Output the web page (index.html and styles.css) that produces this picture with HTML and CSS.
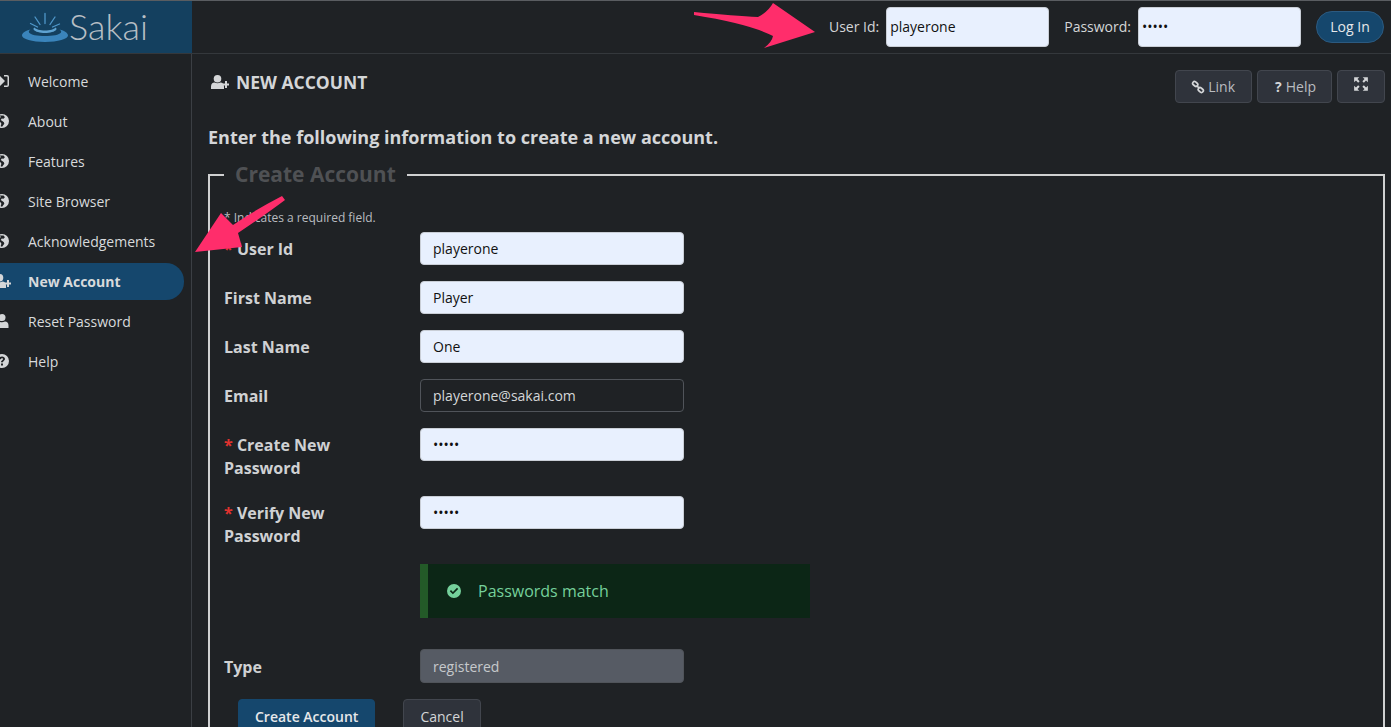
FILE: index.html
```html
<!DOCTYPE html>
<html lang="en">
<head>
    <meta charset="UTF-8">
    <meta name="viewport" content="width=device-width, initial-scale=1.0">
    <title>New Account</title>
    <link rel="stylesheet" href="styles.css">
</head>
<body>

    <svg class="defs" width="0" height="0">
        <symbol id="i-globe" viewBox="0 0 14 14">
            <path fill-rule="evenodd" d="M7 0a7 7 0 1 1 0 14A7 7 0 0 1 7 0zM4.600 1.600 6 3 4.200 4.400 2.600 4.200 1.500 6 3.400 8l2.200.2.8 1.600-.8 2.400 1.500.6 2.200-3-.4-1.600-2-1.400L5.700 6l1-1.600 1.800.4L9.900 3.300 8.600 1.400z"/>
        </symbol>
        <symbol id="i-signin" viewBox="0 0 14 14">
            <path d="M0 5h5V2l5 5-5 5V9H0zM9 1h3a2 2 0 0 1 2 2v8a2 2 0 0 1-2 2H9v-1.500h3a.5.5 0 0 0 .5-.5V3a.5.5 0 0 0-.5-.5H9z"/>
        </symbol>
        <symbol id="i-userplus" viewBox="0 0 18 14">
            <circle cx="6.500" cy="3.800" r="3.800"/>
            <path d="M0 14v-2.500C0 9 1.500 7.500 3.500 7.500c1.800 1 4.200 1 6 0 2 0 3.500 1.500 3.500 4V14z"/>
            <path d="M14 6h2v2.500h2.500v2H16V13h-2v-2.500h-2.500v-2H14z"/>
        </symbol>
        <symbol id="i-user" viewBox="0 0 14 14">
            <circle cx="7" cy="3.600" r="3.500"/>
            <path d="M.5 14v-2.500c0-2.500 1.500-4 3.500-4 1.800 1 4.200 1 6 0 2 0 3.500 1.500 3.500 4V14z"/>
        </symbol>
        <symbol id="i-question" viewBox="0 0 14 14">
            <path fill-rule="evenodd" d="M7 0a7 7 0 1 1 0 14A7 7 0 0 1 7 0zM6 9.500v2h2v-2zM7 2.500C5.300 2.500 4.200 3.400 4 5l1.800.3c.1-.7.500-1.100 1.200-1.100.6 0 1.100.4 1.100.9 0 .5-.3.700-.9 1.100-.8.500-1.200 1-1.200 2.100h2c0-.6.200-.8.800-1.200C8.800 6.500 10 5.900 10 4.900 10 3.400 8.700 2.500 7 2.500z"/>
        </symbol>
        <symbol id="i-link" viewBox="0 0 14 14">
            <g fill="none" stroke="currentColor" stroke-width="1.700">
                <rect x="-2.500" y="-1.800" width="5.600" height="3.600" rx="1.800" transform="translate(4 3.800) rotate(40)"/>
                <rect x="-3.100" y="-1.800" width="5.600" height="3.600" rx="1.800" transform="translate(10 10.200) rotate(40)"/>
                <path d="M5.500 5.500l3 3"/>
            </g>
        </symbol>
        <symbol id="i-expand" viewBox="0 0 14 14">
            <path d="M1 1h4.500L3.900 2.600 5.800 4.500 4.500 5.800 2.600 3.900 1 5.500zM13 1v4.500l-1.600-1.600-1.900 1.900-1.300-1.300 1.900-1.900L8.500 1zM1 13V8.500l1.600 1.600 1.900-1.900 1.300 1.300-1.900 1.900L5.500 13zM13 13H8.500l1.600-1.600-1.900-1.900 1.300-1.300 1.900 1.900L13 8.500z"/>
        </symbol>
        <symbol id="i-check" viewBox="0 0 14 14">
            <path fill-rule="evenodd" d="M7 0a7 7 0 1 1 0 14A7 7 0 0 1 7 0zM10 3.800 5.900 7.900 4 6 2.800 7.200l3.100 3.100 5.300-5.300z"/>
        </symbol>
    </svg>

    <header class="topbar">
        <a class="logo" href="#">
            <svg class="logo-mark" width="48" height="32" viewBox="0 0 48 32">
                <path fill="#3a84bb" d="M1 23.500c0-2.600 3.500-4.800 8.500-6-1.500.9-2 2-1.500 3 1.500 2.500 8.500 3.500 16 3.500s14.500-1 16-3.500c.5-1 0-2.100-1.500-3 5 1.200 8.500 3.400 8.500 6 0 3.500-10 6.500-23 6.500S1 27 1 23.500z"/>
                <path fill="#5fa3d2" d="M13.500 15.500c1.500 2 5.500 3 10.500 3s9-1 10.500-3c1 .7 1.300 1.400.7 2.300-1.300 2-6.200 3.200-11.200 3.200s-9.900-1.200-11.200-3.200c-.6-.9-.3-1.600.7-2.300z"/>
                <path stroke="#4f97ca" stroke-width="1.300" stroke-linecap="round" fill="none" d="M24 1.500v10M14 5l5 7.500M34 5l-5 7.500M9.500 11.500l7 3.500M38.500 12l-7 3"/>
            </svg>
            <span class="logo-text">Sakai</span>
        </a>
        <form class="login">
            <label for="top_user">User Id:</label>
            <input class="login-input" type="text" id="top_user" value="playerone">
            <label class="pass-label" for="top_pass">Password:</label>
            <input class="login-input" type="password" id="top_pass" value="12345">
            <button class="login-btn" type="button">Log In</button>
        </form>
    </header>

    <div class="layout">
        <nav class="sidebar">
            <a class="nav-item" href="#"><svg class="nav-icon"><use href="#i-signin"/></svg>Welcome</a>
            <a class="nav-item" href="#"><svg class="nav-icon"><use href="#i-globe"/></svg>About</a>
            <a class="nav-item" href="#"><svg class="nav-icon"><use href="#i-globe"/></svg>Features</a>
            <a class="nav-item" href="#"><svg class="nav-icon"><use href="#i-globe"/></svg>Site Browser</a>
            <a class="nav-item" href="#"><svg class="nav-icon"><use href="#i-globe"/></svg>Acknowledgements</a>
            <a class="nav-item active" href="#"><svg class="nav-icon"><use href="#i-userplus"/></svg>New Account</a>
            <a class="nav-item" href="#"><svg class="nav-icon"><use href="#i-user"/></svg>Reset Password</a>
            <a class="nav-item" href="#"><svg class="nav-icon"><use href="#i-question"/></svg>Help</a>
        </nav>

        <main class="content">
            <div class="title-row">
                <h1 class="page-title"><svg class="title-icon"><use href="#i-userplus"/></svg>New Account</h1>
                <div class="tools">
                    <a class="tool tool-link" href="#"><svg class="tool-icon"><use href="#i-link"/></svg>Link</a>
                    <a class="tool tool-help" href="#"><b class="tool-q">?</b>Help</a>
                    <a class="tool tool-expand" href="#"><svg class="tool-icon"><use href="#i-expand"/></svg></a>
                </div>
            </div>

            <h2 class="intro">Enter the following information to create a new account.</h2>

            <form>
                <fieldset class="box">
                    <legend>Create Account</legend>
                    <p class="note">* Indicates a required field.</p>

                    <div class="row">
                        <label for="user_id"><span class="req">*</span> User Id</label>
                        <input class="field filled" type="text" id="user_id" value="playerone">
                    </div>
                    <div class="row">
                        <label for="first_name">First Name</label>
                        <input class="field filled" type="text" id="first_name" value="Player">
                    </div>
                    <div class="row">
                        <label for="last_name">Last Name</label>
                        <input class="field filled" type="text" id="last_name" value="One">
                    </div>
                    <div class="row">
                        <label for="email">Email</label>
                        <input class="field" type="text" id="email" value="playerone@sakai.com">
                    </div>
                    <div class="row tall">
                        <label for="pw"><span class="req">*</span> Create New<br>Password</label>
                        <input class="field filled" type="password" id="pw" value="12345">
                    </div>
                    <div class="row tall">
                        <label for="pw2"><span class="req">*</span> Verify New<br>Password</label>
                        <input class="field filled" type="password" id="pw2" value="12345">
                    </div>

                    <div class="match">
                        <svg class="match-icon"><use href="#i-check"/></svg>Passwords match
                    </div>

                    <div class="row">
                        <label class="type-label" for="type">Type</label>
                        <input class="field locked" type="text" id="type" value="registered" readonly>
                    </div>

                    <div class="actions">
                        <button class="btn primary" type="submit">Create Account</button>
                        <button class="btn" type="button">Cancel</button>
                    </div>
                </fieldset>
            </form>
        </main>
    </div>

    <!-- annotation arrows drawn over the screenshot -->
    <svg class="arrows" width="1391" height="727" viewBox="0 0 1391 727">
        <path d="M694 12Q735 16 758 17Q768 12 773 3L815 32L764 48Q772 42 773 36Q750 24 694 15Z"/>
        <path d="M282 196Q255 210 233 225L221 213L195 252L242 247L238 233Q265 215 285 200Z"/>
    </svg>

</body>
</html>
```

FILE: styles.css
```css
* {
    box-sizing: border-box;
}
html, body {
    height: 100%;
}
body {
    margin: 0;
    overflow: hidden;
    font-family: "Open Sans", Arial, sans-serif;
    font-size: 14px;
    color: #d4d6d8;
    background-color: #1f2225;
    border-top: 1px solid #5a5d61;
}
a {
    color: inherit;
    text-decoration: none;
}
.defs {
    position: absolute;
}

/* top bar */
.topbar {
    display: flex;
    justify-content: space-between;
    height: 53px;
    border-bottom: 1px solid #34383c;
}
.logo {
    display: flex;
    align-items: center;
    width: 192px;
    padding-left: 21px;
    background-color: #14405f;
}
.logo-mark {
    flex: none;
    margin-top: 2px;
}
.logo-text {
    font-family: Lato, sans-serif;
    font-weight: 300;
    font-size: 36px;
    line-height: 1;
    color: #b7bec4;
    margin-top: -3px;
}
.login {
    display: flex;
    align-items: center;
    padding-right: 7px;
    padding-bottom: 1px;
    font-size: 14px;
}
.login label {
    margin-right: 7px;
}
.login .pass-label {
    margin-left: 15px;
}
.login-input {
    width: 163px;
    height: 40px;
    padding: 0 3px;
    font-family: inherit;
    font-size: 14px;
    color: #111;
    background-color: #e8f0fe;
    border: 1px solid #c9ced6;
    border-radius: 4px;
}
.login-btn {
    width: 68px;
    height: 32px;
    margin-left: 15px;
    font-family: inherit;
    font-size: 14px;
    color: #e6e8ea;
    background-color: #15476d;
    border: 1px solid #2c5a80;
    border-radius: 16px;
}

/* layout */
.layout {
    display: flex;
    height: 673px;
}
.sidebar {
    flex: none;
    width: 192px;
    padding: 9px 7px 0 0;
    border-right: 1px solid #3b3f44;
    overflow: hidden;
}
.nav-item {
    display: flex;
    align-items: center;
    gap: 19px;
    height: 37px;
    margin-bottom: 3px;
    margin-left: -5px;
    padding-bottom: 1px;
    font-size: 14px;
    color: #d8dadc;
}
.nav-item.active {
    font-weight: 700;
    background-color: #15476d;
    border-radius: 0 18px 18px 0;
}
.nav-icon {
    flex: none;
    width: 14px;
    height: 14px;
    fill: #d4d6d8;
    overflow: visible;
}
.active .nav-icon {
    width: 18px;
    margin: 0 -2px;
}

/* content */
.content {
    flex: 1;
    padding: 16px 6px 0 16px;
    min-width: 0;
}
.title-row {
    display: flex;
    justify-content: space-between;
    height: 33px;
}
.page-title {
    display: flex;
    align-items: center;
    gap: 7px;
    margin: 0 0 0 3px;
    height: 24px;
    font-size: 17.500px;
    font-weight: 700;
    text-transform: uppercase;
    color: #d4d6d8;
}
.title-icon {
    width: 18px;
    height: 14px;
    fill: #d4d6d8;
}
.tools {
    display: flex;
    gap: 5px;
}
.tool {
    display: flex;
    align-items: center;
    justify-content: center;
    gap: 4px;
    height: 33px;
    padding: 0 16px;
    font-size: 14px;
    color: #b9bcc0;
    background-color: #2f333b;
    border: 1px solid #42464e;
    border-radius: 4px;
}
.tool-link {
    gap: 3px;
    padding-left: 15px;
}
.tool-help {
    padding: 0 15px 0 17px;
}
.tool-expand {
    padding: 0 16px 5px;
    width: 48px;
}
.tool-icon {
    flex: none;
    width: 14px;
    height: 14px;
    color: #d4d6d8;
    fill: #d4d6d8;
}
.tool-expand .tool-icon {
    width: 16px;
    height: 16px;
}
.tool-q {
    color: #d4d6d8;
}
.intro {
    margin: 22px 0 0;
    font-size: 18px;
    line-height: 25px;
    font-weight: 700;
    color: #d4d6d8;
}
.box {
    margin: 11px 0 0;
    padding: 22px 14px 0;
    min-width: 0;
    border: 2px solid #cfd0d1;
    border-bottom: 0;
}
.box legend {
    padding: 0 11px;
    font-size: 21px;
    line-height: 27px;
    font-weight: 700;
    color: #4f5154;
}
.note {
    margin: 0 0 6px;
    font-size: 12px;
    line-height: 16px;
    color: #b9bcc0;
}
.row {
    display: grid;
    grid-template-columns: 196px 263px;
    margin-bottom: 16px;
}
.row label {
    font-size: 16px;
    line-height: 23px;
    font-weight: 700;
    padding-top: 6px;
    color: #cfd1d3;
}
.row .type-label {
    padding-top: 7px;
}
.row.tall {
    min-height: 52px;
}
.req {
    color: #e0322f;
}
.field {
    width: 264px;
    height: 33px;
    padding: 0 12px;
    font-family: inherit;
    font-size: 14px;
    color: #d4d6d8;
    background-color: #1f2225;
    border: 1px solid #50545a;
    border-radius: 4px;
}
.field.filled {
    color: #111;
    background-color: #e8f0fe;
    border-color: #c9ced6;
}
.field.locked {
    height: 34px;
    color: #c6c9cc;
    background-color: #565b64;
}
.match {
    display: flex;
    align-items: center;
    gap: 17px;
    width: 390px;
    height: 54px;
    margin: 0 0 31px 196px;
    padding-left: 19px;
    font-size: 16px;
    color: #75d09b;
    background-color: #0c2616;
    border-left: 8px solid #235a28;
}
.match-icon {
    width: 14px;
    height: 14px;
    fill: #75d09b;
}
.actions {
    display: flex;
    gap: 28px;
    padding-left: 14px;
    margin-top: 16px;
}
.btn {
    height: 34px;
    padding: 0 16px;
    font-family: inherit;
    font-size: 14px;
    color: #d4d6d8;
    background-color: #2f333b;
    border: 1px solid #42464e;
    border-radius: 4px;
}
.btn.primary {
    font-weight: 600;
    color: #e6e8ea;
    background-color: #15476d;
    border-color: #15476d;
}

/* arrows */
.arrows {
    position: absolute;
    top: 0;
    left: 0;
    fill: #ff2d6b;
    pointer-events: none;
}
```
